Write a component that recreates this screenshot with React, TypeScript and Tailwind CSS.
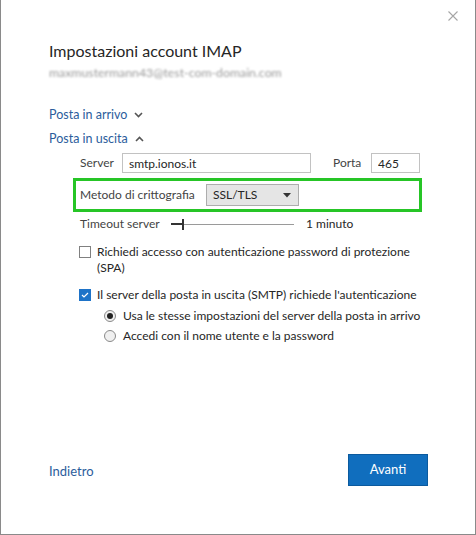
import React, { useState } from 'react';

const font = { fontFamily: 'Lato, "Noto Sans", sans-serif' };

const Chevron: React.FC<{ up?: boolean }> = ({ up }) => (
  <svg width="9" height="6" viewBox="0 0 9 6" className="ml-[7px]">
    <path
      d={up ? 'M1 5 L4.5 1.5 L8 5' : 'M1 1 L4.5 4.5 L8 1'}
      fill="none"
      stroke="#555"
      strokeWidth="1.6"
    />
  </svg>
);

const Radio: React.FC<{ on: boolean }> = ({ on }) => (
  <span className="w-[12px] h-[12px] rounded-full border border-[#8a8a8a] bg-[#f0f0f0] flex items-center justify-center shrink-0">
    {on && <span className="w-[6px] h-[6px] rounded-full bg-[#222]" />}
  </span>
);

const App: React.FC = () => {
  const [spa, setSpa] = useState(false);
  const [auth, setAuth] = useState(true);
  const [mode, setMode] = useState<'same' | 'user'>('same');

  return (
    <div
      className="w-[476px] h-[535px] bg-white border-x border-b border-[#8a8a8a] relative flex flex-col text-[#262626]"
      style={font}
    >
      {/* Close */}
      <button className="absolute top-[11px] left-[447px] w-[10px] h-[10px] flex items-center justify-center">
        <svg width="10" height="10" viewBox="0 0 10 10">
          <path d="M0.5 0.5 L9.5 9.5 M9.5 0.5 L0.5 9.5" stroke="#a6a6a6" strokeWidth="1.1" />
        </svg>
      </button>

      <div className="pl-12 pr-[20px] pt-[40px] flex flex-col flex-1">
        <h1 className="text-[16px] leading-[22px] text-[#262626]">Impostazioni account IMAP</h1>
        <div className="text-[12.3px] leading-[16px] mt-[3px] text-[#9a9a9a] blur-[0.8px] select-none">
          maxmustermann43@test-com-domain.com
        </div>

        {/* Incoming */}
        <button className="flex items-center mt-[25px] h-[18px] text-[12.5px] text-[#2c5d9c]">
          Posta in arrivo
          <Chevron />
        </button>
        <button className="flex items-center mt-[6px] h-[18px] text-[12.5px] text-[#2c5d9c]">
          Posta in uscita
          <Chevron up />
        </button>

        {/* Outgoing settings */}
        <div className="ml-[24px] mt-[5px] flex flex-col text-[12px] text-[#444] whitespace-nowrap">
          <div className="flex items-center h-[20px] pl-[7px]">
            <span className="w-[42px]">Server</span>
            <input
              className="w-[189px] h-[20px] border border-[#c2c2c2] px-[6px] text-[12px] text-[#262626] outline-none"
              defaultValue="smtp.ionos.it"
              style={font}
            />
            <span className="ml-[22px] w-[38px]">Porta</span>
            <input
              className="w-[49px] h-[20px] border border-[#c2c2c2] px-[6px] text-[12px] text-[#262626] outline-none"
              defaultValue="465"
              style={font}
            />
          </div>

          <div className="mt-[5px] w-[349px] h-[34px] border-[3px] border-[#26c526] flex items-center pl-[4px]">
            <span className="w-[126px]">Metodo di crittografia</span>
            <button className="w-[93px] h-[22px] bg-[#e5e5e5] border border-[#adadad] flex items-center justify-between pl-[6px] pr-[7px] text-[12px] text-[#262626]">
              SSL/TLS
              <svg width="8" height="5" viewBox="0 0 8 5">
                <path d="M0 0 H8 L4 4.5 Z" fill="#333" />
              </svg>
            </button>
          </div>

          <div className="flex items-center h-[22px] mt-[1px] pl-[7px]">
            <span className="w-[91px]">Timeout server</span>
            <div className="relative w-[123px] h-[11px]">
              <div className="absolute left-0 right-0 top-[5px] h-px bg-[#9a9a9a]" />
              <div className="absolute left-0 w-[12px] top-[4px] h-[2px] bg-[#333]" />
              <div className="absolute left-[11px] top-0 w-[2px] h-[11px] bg-[#333]" />
            </div>
            <span className="ml-[12px] text-[#262626]">1 minuto</span>
          </div>

          {/* SPA */}
          <label className="flex items-start mt-[9px] pl-[6px] cursor-pointer">
            <span
              onClick={() => setSpa(!spa)}
              className="mt-[2px] w-[12px] h-[12px] border border-[#808080] bg-white shrink-0"
            />
            <span className="ml-[6px] leading-[16px] text-[#262626]">
              Richiedi accesso con autenticazione password di protezione
              <br />
              (SPA)
            </span>
          </label>

          {/* SMTP auth */}
          <label className="flex items-center mt-[11px] h-[16px] pl-[6px] cursor-pointer">
            <span
              onClick={() => setAuth(!auth)}
              className="w-[12px] h-[12px] bg-[#1e73c8] flex items-center justify-center shrink-0"
            >
              {auth && (
                <svg width="8" height="6" viewBox="0 0 8 6">
                  <path d="M1 3 L3 5 L7 1" fill="none" stroke="#fff" strokeWidth="1.2" />
                </svg>
              )}
            </span>
            <span className="ml-[6px] text-[#262626]">
              Il server della posta in uscita (SMTP) richiede l'autenticazione
            </span>
          </label>

          <div className="ml-[31px] mt-[5px] flex flex-col gap-[4px] text-[#262626]">
            <label className="flex items-center h-[16px] cursor-pointer" onClick={() => setMode('same')}>
              <Radio on={mode === 'same'} />
              <span className="ml-[7px]">Usa le stesse impostazioni del server della posta in arrivo</span>
            </label>
            <label className="flex items-center h-[16px] cursor-pointer" onClick={() => setMode('user')}>
              <Radio on={mode === 'user'} />
              <span className="ml-[7px]">Accedi con il nome utente e la password</span>
            </label>
          </div>
        </div>

        {/* Footer */}
        <div className="mt-auto mb-[48px] flex items-center justify-between">
          <button className="text-[13px] text-[#2c5d9c] mt-[3px]">Indietro</button>
          <button className="w-[80px] h-[32px] bg-[#106ebe] border border-[#0b5a9e] text-white text-[13px] mr-[27px]">
            Avanti
          </button>
        </div>
      </div>
    </div>
  );
};

export default App;
